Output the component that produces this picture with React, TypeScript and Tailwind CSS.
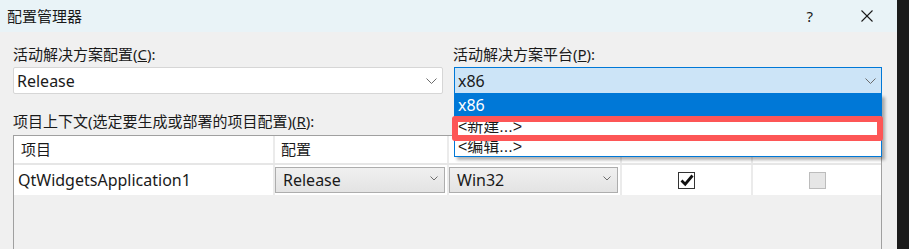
import React from "react";

function Chevron({ small = false }: { small?: boolean }) {
  if (small) {
    return (
      <svg width="8" height="5" viewBox="0 0 8 5">
        <polyline points="0.5,0.5 4,4 7.5,0.5" fill="none" stroke="#6e6e6e" strokeWidth="1" />
      </svg>
    );
  }
  return (
    <svg width="11" height="6" viewBox="0 0 11 6">
      <polyline points="0.5,0.5 5.5,5.5 10.5,0.5" fill="none" stroke="#6b6b6b" strokeWidth="1" />
    </svg>
  );
}

function CellCombo({ value }: { value: string }) {
  return (
    <div className="h-[26px] flex items-center justify-between pl-[7px] pr-[6px] border border-[#adadad] bg-gradient-to-b from-[#f0f0f0] to-[#e3e3e3] text-[16px] leading-none">
      <span>{value}</span>
      <div className="-mt-[4px]">
        <Chevron small />
      </div>
    </div>
  );
}

export default function App() {
  return (
    <div className="flex w-[909px] h-[249px] overflow-hidden bg-[#1b1b1b] font-[family-name:'Noto_Sans','Noto_Sans_CJK_SC',sans-serif] text-[#1a1a1a]">
      <div className="w-[897px] flex flex-col bg-[#f0f0f0]">
        {/* title bar */}
        <div className="h-[32px] shrink-0 flex items-center bg-[#e9f3f7] pl-[7px]">
          <span className="flex-1 text-[15px] leading-none">配置管理器</span>
          <span className="text-[15px] leading-none mr-[48px]">?</span>
          <svg width="12" height="12" viewBox="0 0 12 12" className="mr-[24px]">
            <line x1="0.5" y1="0.5" x2="11.5" y2="11.5" stroke="#1a1a1a" strokeWidth="1.1" />
            <line x1="11.5" y1="0.5" x2="0.5" y2="11.5" stroke="#1a1a1a" strokeWidth="1.1" />
          </svg>
        </div>

        <div className="flex-1 min-h-0 flex flex-col pl-[13px] pr-[15px] pt-[12px]">
          <div className="flex gap-[10px]">
            <div className="w-[430px] flex flex-col">
              <div className="text-[15px] leading-[20px]">
                活动解决方案配置(<span className="underline">C</span>):
              </div>
              <div className="mt-[3px] h-[27px] flex items-center justify-between pl-[3px] pr-[5px] bg-white border border-[#d6d6d6] rounded-[2px] text-[16px]">
                <span>Release</span>
                <Chevron />
              </div>
            </div>

            <div className="w-[429px] flex flex-col">
              <div className="text-[15px] leading-[20px]">
                活动解决方案平台(<span className="underline">P</span>):
              </div>
              <div className="relative mt-[3px] ml-[1px] z-10">
                <div className="h-[27px] flex items-center justify-between pl-[3px] pr-[5px] bg-[#cce4f7] border border-[#0078d7] text-[16px]">
                  <span>x86</span>
                  <Chevron />
                </div>
                <div className="absolute top-full left-0 right-0 flex flex-col bg-white border border-t-0 border-[#0078d7] shadow-[3px_3px_3px_rgba(0,0,0,0.3)] text-[16px] leading-[18px]">
                  <div className="h-[22px] flex items-center pl-[3px] bg-[#0078d7] text-white">x86</div>
                  <div className="h-[21px] flex items-center pl-[3px] pt-[1px] font-[family-name:'Liberation_Sans','Noto_Sans_CJK_SC',sans-serif]">&lt;新建...&gt;</div>
                  <div className="h-[19px] flex items-center pl-[3px] pt-[1px] font-[family-name:'Liberation_Sans','Noto_Sans_CJK_SC',sans-serif]">&lt;编辑...&gt;</div>
                </div>
                {/* annotation */}
                <div className="absolute top-[49px] left-[-2px] right-[-1px] h-[25px] border-[6px] border-[#fd5656] rounded-[3px] pointer-events-none" />
              </div>
            </div>
          </div>

          <div className="mt-[17px] text-[15px] leading-[20px]">
            项目上下文(选定要生成或部署的项目配置)(<span className="underline">R</span>):
          </div>

          <div className="mt-[4px] flex-1 flex flex-col border-l border-t border-r border-[#a0a0a0] w-[869px]">
            <div className="h-[27px] flex bg-white text-[15px] border-b-2 border-[#e6e6e6] box-content">
              <div className="w-[261px] flex items-center pl-[7px] border-r-2 border-[#ebebeb]">项目</div>
              <div className="w-[174px] flex items-center pl-[6px] border-r-2 border-[#ebebeb]">配置</div>
              <div className="w-[173px] border-r-2 border-[#ebebeb]" />
              <div className="w-[131px] border-r-2 border-[#ebebeb]" />
              <div className="flex-1" />
            </div>
            <div className="h-[30px] flex bg-white text-[16px]">
              <div className="w-[261px] flex items-center pl-[4px] border-r-2 border-[#ebebeb]">QtWidgetsApplication1</div>
              <div className="w-[174px] pr-[2px] flex flex-col justify-center border-r-2 border-[#ebebeb]">
                <CellCombo value="Release" />
              </div>
              <div className="w-[173px] pr-[2px] flex flex-col justify-center border-r-2 border-[#ebebeb]">
                <CellCombo value="Win32" />
              </div>
              <div className="w-[131px] flex items-center justify-center border-r-2 border-[#ebebeb]">
                <div className="w-[17px] h-[17px] border border-[#333333] bg-white flex items-center justify-center">
                  <svg width="14" height="13" viewBox="0 0 14 13">
                    <polyline points="1.5,6.5 5.2,10.2 12.5,1.5" fill="none" stroke="#111111" strokeWidth="2.8" />
                  </svg>
                </div>
              </div>
              <div className="flex-1 flex items-center justify-center">
                <div className="w-[17px] h-[17px] border border-[#bcbcbc] bg-[#e6e6e6]" />
              </div>
            </div>
            <div className="flex-1 bg-[#f0f0f0]" />
          </div>
        </div>
      </div>
    </div>
  );
}
